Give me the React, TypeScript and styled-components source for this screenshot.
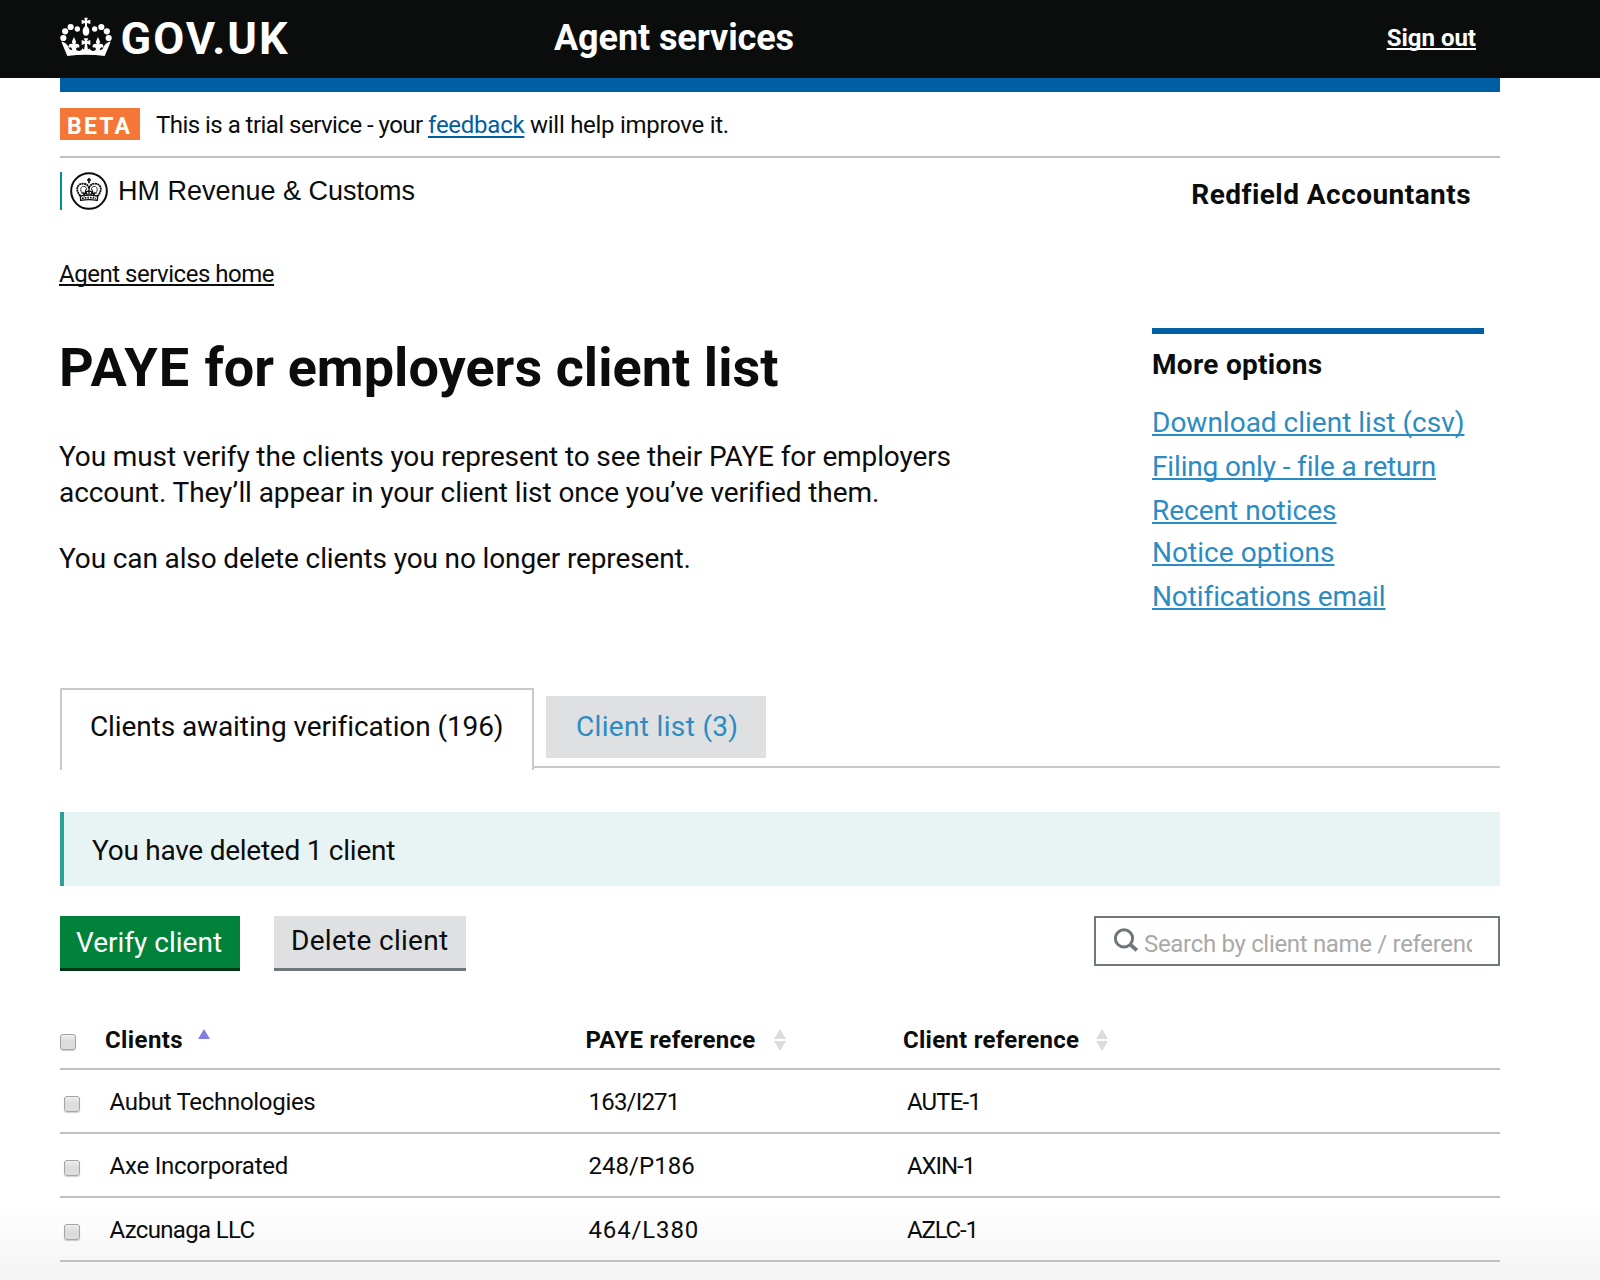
import React from "react";
import styled, { createGlobalStyle } from "styled-components";

const Global = createGlobalStyle`
  *, *::before, *::after { box-sizing: border-box; }
  html, body { margin: 0; padding: 0; }
  body { font-family: Roboto, "Liberation Sans", sans-serif; color: #0b0c0c; background: #fff; }
`;

const Page = styled.div`
  width: 1600px;
  height: 1280px;
  overflow: hidden;
  background: linear-gradient(#fff 1205px, #f4f4f4 1280px);
`;

const Container = styled.div`
  width: 1440px;
  margin-left: 60px;
`;

const Track = styled.span<{ $ls?: number }>`
  letter-spacing: ${(p) => p.$ls ?? 0}px;
  white-space: pre;
`;

/* ---------- header ---------- */

const Header = styled.header`
  height: 78px;
  background: #0b0c0c;
  color: #fff;
`;

const HeaderInner = styled(Container)`
  display: flex;
  align-items: center;
  height: 76px;
`;

const Brand = styled.div`
  display: flex;
  align-items: center;
  gap: 8.5px;
  width: 494px;
`;

const BrandName = styled.span`
  padding-top: 1px;
  font-size: 45px;
  font-weight: 700;
  line-height: 60px;
  letter-spacing: 2px;
`;

const ServiceName = styled.div`
  font-size: 36px;
  font-weight: 700;
  line-height: 44px;
  letter-spacing: -0.1px;
`;

const SignOut = styled.a`
  margin: 0 24px 0 auto;
  color: #fff;
  font-size: 24px;
  font-weight: 700;
  line-height: 30px;
  text-decoration: underline 2px;
  text-decoration-skip-ink: none;
  text-underline-offset: 2px;
`;

const BlueBar = styled.div`
  height: 14px;
  background: #005ea5;
`;

const PhaseBanner = styled.div`
  display: flex;
  align-items: center;
  gap: 16px;
  height: 66px;
  border-bottom: 2px solid #bfc1c3;
  font-size: 24px;
  line-height: 30px;
`;

const PhaseTag = styled.strong`
  width: 80px;
  height: 32px;
  padding-left: 7px;
  background: #f47738;
  color: #fff;
  font-size: 23px;
  line-height: 37px;
  letter-spacing: 2.2px;
`;

const PhaseText = styled.div`
  padding-top: 2px;
`;

const InlineLink = styled.a`
  color: #005ea5;
  text-decoration: underline 2px;
  text-decoration-skip-ink: none;
  text-underline-offset: 3px;
`;

/* ---------- organisation ---------- */

const OrgRow = styled.div`
  display: flex;
  justify-content: space-between;
  height: 38px;
  margin-top: 14px;
`;

const Org = styled.div`
  display: flex;
  align-items: center;
  padding-left: 8px;
  border-left: 2px solid #009390;
  font: 400 27px/38px "Liberation Sans", Arial, sans-serif;
  gap: 10px;
`;

const AccountName = styled.div`
  padding: 7px 29px 0 0;
  font-size: 28px;
  font-weight: 700;
  line-height: 32px;
`;

const Breadcrumb = styled.a`
  display: block;
  width: max-content;
  margin: 49px 0 0 -1px;
  font-size: 24px;
  line-height: 30px;
  color: #0b0c0c;
  text-decoration: underline 2px;
  text-decoration-skip-ink: none;
  text-underline-offset: 2px;
`;

/* ---------- intro ---------- */

const Intro = styled.div`
  display: flex;
  justify-content: space-between;
  height: 399px;
  padding: 39px 16px 0 0;
`;

const Title = styled.h1`
  margin: 10px 0 41px -1px;
  font-size: 54px;
  font-weight: 700;
  line-height: 60px;
`;

const Para = styled.p`
  margin: 0 0 30px -1px;
  font-size: 28px;
  line-height: 36px;
`;

const Side = styled.aside`
  width: 332px;
  border-top: 6px solid #005ea5;
`;

const SideTitle = styled.h2`
  margin: 15px 0 20px;
  font-size: 28px;
  font-weight: 700;
  line-height: 32px;
`;

const SideList = styled.ul`
  margin: 0;
  padding: 0;
  list-style: none;
`;

const SideItem = styled.li<{ $h: number }>`
  height: ${(p) => p.$h}px;
  font-size: 28px;
  line-height: 44px;
`;

const SideLink = styled.a`
  color: #2b8cc4;
  text-decoration: underline 2px;
  text-decoration-skip-ink: none;
  text-underline-offset: 2px;
`;

/* ---------- tabs ---------- */

const Tabs = styled.nav`
  display: flex;
  align-items: flex-start;
  height: 80px;
  border-bottom: 2px solid #c8c9ca;
`;

const ActiveTab = styled.a`
  width: 474px;
  height: 82px;
  padding: 19px 0 0 28px;
  border: 2px solid #c8c9ca;
  border-bottom: 0;
  background: #fff;
  color: #0b0c0c;
  font-size: 28px;
  line-height: 36px;
`;

const Tab = styled.a`
  width: 220px;
  height: 62px;
  margin: 8px 0 0 12px;
  padding-left: 30px;
  background: #dee0e2;
  color: #2b8cc4;
  font-size: 28px;
  line-height: 61px;
`;

const Notice = styled.div`
  height: 74px;
  margin-top: 44px;
  padding: 2px 0 0 28px;
  border-left: 4px solid #28a197;
  background: #e8f4f3;
  font-size: 28px;
  line-height: 74px;
`;

/* ---------- actions ---------- */

const Actions = styled.div`
  display: flex;
  align-items: flex-start;
  margin-top: 30px;
`;

const Button = styled.button<{ $secondary?: boolean }>`
  width: ${(p) => (p.$secondary ? 192 : 180)}px;
  height: 55px;
  margin: 0 34px 0 0;
  padding: ${(p) => (p.$secondary ? "0 0 2px 17px" : "2px 0 0 16px")};
  border: 0;
  border-bottom: 3px solid ${(p) => (p.$secondary ? "#6f777b" : "#003618")};
  background: ${(p) => (p.$secondary ? "#dee0e2" : "#00823b")};
  color: ${(p) => (p.$secondary ? "#0b0c0c" : "#fff")};
  font: 400 28px/36px Roboto, sans-serif;
  text-align: left;
`;

const Search = styled.label`
  display: flex;
  width: 406px;
  height: 50px;
  margin-left: auto;
  padding: 10px 26px 0 18px;
  border: 2px solid #6f777b;
  background: #fff;
`;

const SearchInput = styled.input`
  flex: 1;
  min-width: 0;
  height: 30px;
  margin: 1px 0 0 6px;
  padding: 0;
  border: 0;
  outline: 0;
  background: transparent;
  font: 400 24px/30px Roboto, sans-serif;
  letter-spacing: -0.32px;
  &::placeholder { color: #a9a9a9; opacity: 1; }
`;

/* ---------- table ---------- */

const Table = styled.table`
  width: 1440px;
  margin-top: 39px;
  border-collapse: separate;
  border-spacing: 0;
  table-layout: fixed;
  font-size: 24px;
  line-height: 30px;
`;

const Th = styled.th<{ $w?: number }>`
  width: ${(p) => (p.$w ? p.$w + "px" : "auto")};
  height: 60px;
  padding: 2px 0 0;
  border-bottom: 2px solid #bfc1c3;
  text-align: left;
  font-weight: 700;
`;

const Td = styled.td<{ $pad?: number }>`
  height: 64px;
  padding: 2px 0 0 ${(p) => p.$pad ?? 4}px;
  border-bottom: 2px solid #bfc1c3;
`;

const HeadCell = styled.div<{ $gap: number }>`
  display: flex;
  align-items: center;
  gap: ${(p) => p.$gap}px;
  padding-left: 1px;
`;

const Check = styled.input`
  appearance: none;
  display: block;
  width: 16px;
  height: 16px;
  margin: 3px 0 0;
  border: 1px solid #a3a3a3;
  border-radius: 3px;
  background: linear-gradient(#eee, #dcdcdc 50%, #dedede);
  box-shadow: 0 1px 1px rgba(0, 0, 0, 0.2);
`;

/* ---------- drawings ---------- */

const Fleur = ({ x }: { x: number }) => (
  <path
    transform={`translate(${x} 0)`}
    d="M0 78c2 8 6 11 6 16 0 3-1 5-3 7 2-1 5-2 8-1 5 1 7 7 4 11-2-2-5-2-7 0-2 3-3 6-3 10H-5c0-4-1-7-3-10-2-2-5-2-7 0-3-4-1-10 4-11 3-1 6 0 8 1-2-2-3-4-3-7 0-5 4-8 6-16z"
  />
);

function Crown() {
  return (
    <svg width="52" height="42" viewBox="15 19 156 126" fill="#fff">
      <circle cx="25" cy="82" r="9.3" />
      <circle cx="30.5" cy="62" r="9.3" />
      <circle cx="47" cy="49" r="9.3" />
      <circle cx="67" cy="55" r="8" />
      <circle cx="161" cy="82" r="9.3" />
      <circle cx="155.5" cy="62" r="9.3" />
      <circle cx="139" cy="49" r="9.3" />
      <circle cx="119" cy="55" r="8" />
      <path d="M88 21h10l-2 9 10-3v13l-10-3v10c4 3 7 8 7 16 0 7-4 12-10 12s-10-5-10-12c0-8 3-13 7-16V37l-10 3V27l10 3z" />
      <Fleur x={57} />
      <Fleur x={129} />
      <path d="M86 83h14l-4 9 10-4v15l-10-4 3 20H87l3-20-10 4V88l10 4z" />
      <path d="M37 136L19 93c9 0 19 7 23 20 2 6 10 7 14 2h6c5 8 16 8 21-2 3 6 17 6 20 0 5 10 16 10 21 2h6c4 5 12 4 14-2 4-13 14-20 23-20l-18 43q-56-8-112 0z" />
    </svg>
  );
}

function Crest() {
  return (
    <svg width="38" height="38" viewBox="0 0 114 114" fill="none" stroke="#0b0c0c">
      <circle cx="57" cy="57" r="53.5" strokeWidth="6" />
      <path d="M57 18v16M51 24h12" strokeWidth="5" />
      <path d="M31 72C14 52 22 35 40 35c9 0 15 6 17 14 2-8 8-14 17-14 18 0 26 17 9 37" strokeWidth="5.5" strokeDasharray="6 1.5" />
      <path d="M37 66c-8-12-5-23 4-23 6 0 9 5 9 11M77 66c8-12 5-23-4-23-6 0-9 5-9 11" strokeWidth="2.5" />
      <path d="M57 44v26M50 58h14M38 60l5 10 4-13 5 13M76 60l-5 10-4-13-5 13" strokeWidth="4" />
      <path d="M31 72q26-5 52 0l-1 13q-25-4-50 0z" strokeWidth="4" />
      <path d="M36 79q21-4 42 0" strokeWidth="5" strokeDasharray="5 3" />
    </svg>
  );
}

function SearchIcon() {
  return (
    <svg width="24" height="24" viewBox="0 0 24 24" fill="none" stroke="#6f777b" strokeWidth="3">
      <circle cx="10" cy="10.4" r="8.6" />
      <path d="M16 16.3l6.8 6" strokeWidth="3.8" />
    </svg>
  );
}

function SortBoth() {
  return (
    <svg width="12" height="22" viewBox="0 0 12 22" fill="#dcdcdc">
      <path d="M6 0l6 10H0zM6 22l6-10H0z" />
    </svg>
  );
}

function SortUp() {
  return (
    <svg width="12" height="22" viewBox="0 0 12 22" fill="#8080e0">
      <path d="M6 0l6 10H0z" />
    </svg>
  );
}

/* label, tracking, row height */
const links: [string, number, number][] = [
  ["Download client list (csv)", 0, 44],
  ["Filing only - file a return", -0.15, 44],
  ["Recent notices", 0, 42],
  ["Notice options", 0.04, 44],
  ["Notifications email", -0.1, 44],
];

/* text and tracking for each cell */
const clients: [string, number][][] = [
  [["Aubut Technologies", -0.3], ["163/I271", -0.8], ["AUTE-1", -0.85]],
  [["Axe Incorporated", -0.22], ["248/P186", 0.05], ["AXIN-1", -1.1]],
  [["Azcunaga LLC", -0.65], ["464/L380", 0.85], ["AZLC-1", -1.2]],
];

export default function App() {
  return (
    <Page>
      <Global />
      <Header>
        <HeaderInner>
          <Brand>
            <Crown />
            <BrandName>GOV.UK</BrandName>
          </Brand>
          <ServiceName>Agent services</ServiceName>
          <SignOut>Sign out</SignOut>
        </HeaderInner>
      </Header>
      <Container>
        <BlueBar />
        <PhaseBanner>
          <PhaseTag>BETA</PhaseTag>
          <PhaseText>
            <Track $ls={-0.53}>This is a trial service - your </Track>
            <InlineLink><Track $ls={-0.25}>feedback</Track></InlineLink>
            <Track $ls={-0.28}> will help improve it.</Track>
          </PhaseText>
        </PhaseBanner>
        <OrgRow>
          <Org>
            <Crest />
            <Track>HM Revenue &amp; Customs</Track>
          </Org>
          <AccountName><Track $ls={0.45}>Redfield Accountants</Track></AccountName>
        </OrgRow>
        <Breadcrumb><Track $ls={-0.48}>Agent services home</Track></Breadcrumb>
        <Intro>
          <div>
            <Title>
              <Track $ls={1}>PAYE </Track>
              <Track $ls={0.04}>for employers client list</Track>
            </Title>
            <Para>
              <Track $ls={-0.12}>You must verify the clients you represent to see their PAYE for employers</Track>
              <br />
              <Track $ls={-0.09}>account. They’ll appear in your client list once you’ve verified them.</Track>
            </Para>
            <Para><Track $ls={-0.13}>You can also delete clients you no longer represent.</Track></Para>
          </div>
          <Side>
            <SideTitle><Track $ls={0.3}>More options</Track></SideTitle>
            <SideList>
              {links.map(([label, ls, h]) => (
                <SideItem key={label} $h={h}>
                  <SideLink><Track $ls={ls}>{label}</Track></SideLink>
                </SideItem>
              ))}
            </SideList>
          </Side>
        </Intro>
        <Tabs>
          <ActiveTab><Track $ls={-0.1}>Clients awaiting verification (196)</Track></ActiveTab>
          <Tab><Track $ls={0.33}>Client list (3)</Track></Tab>
        </Tabs>
        <Notice><Track $ls={-0.25}>You have deleted 1 client</Track></Notice>
        <Actions>
          <Button><Track>Verify client</Track></Button>
          <Button $secondary><Track $ls={0.3}>Delete client</Track></Button>
          <Search>
            <SearchIcon />
            <SearchInput placeholder="Search by client name / reference" />
          </Search>
        </Actions>
        <Table>
          <thead>
            <tr>
              <Th $w={44}><Check type="checkbox" /></Th>
              <Th $w={480.5}><HeadCell $gap={15}><Track $ls={0.39}>Clients</Track><SortUp /></HeadCell></Th>
              <Th $w={317.5}><HeadCell $gap={18}><Track $ls={0.31}>PAYE reference</Track><SortBoth /></HeadCell></Th>
              <Th><HeadCell $gap={17}><Track $ls={0.25}>Client reference</Track><SortBoth /></HeadCell></Th>
            </tr>
          </thead>
          <tbody>
            {clients.map(([name, paye, ref]) => (
              <tr key={name[0]}>
                <Td><Check type="checkbox" /></Td>
                <Td $pad={5.5}><Track $ls={name[1]}>{name[0]}</Track></Td>
                <Td><Track $ls={paye[1]}>{paye[0]}</Track></Td>
                <Td $pad={5}><Track $ls={ref[1]}>{ref[0]}</Track></Td>
              </tr>
            ))}
          </tbody>
        </Table>
      </Container>
    </Page>
  );
}
